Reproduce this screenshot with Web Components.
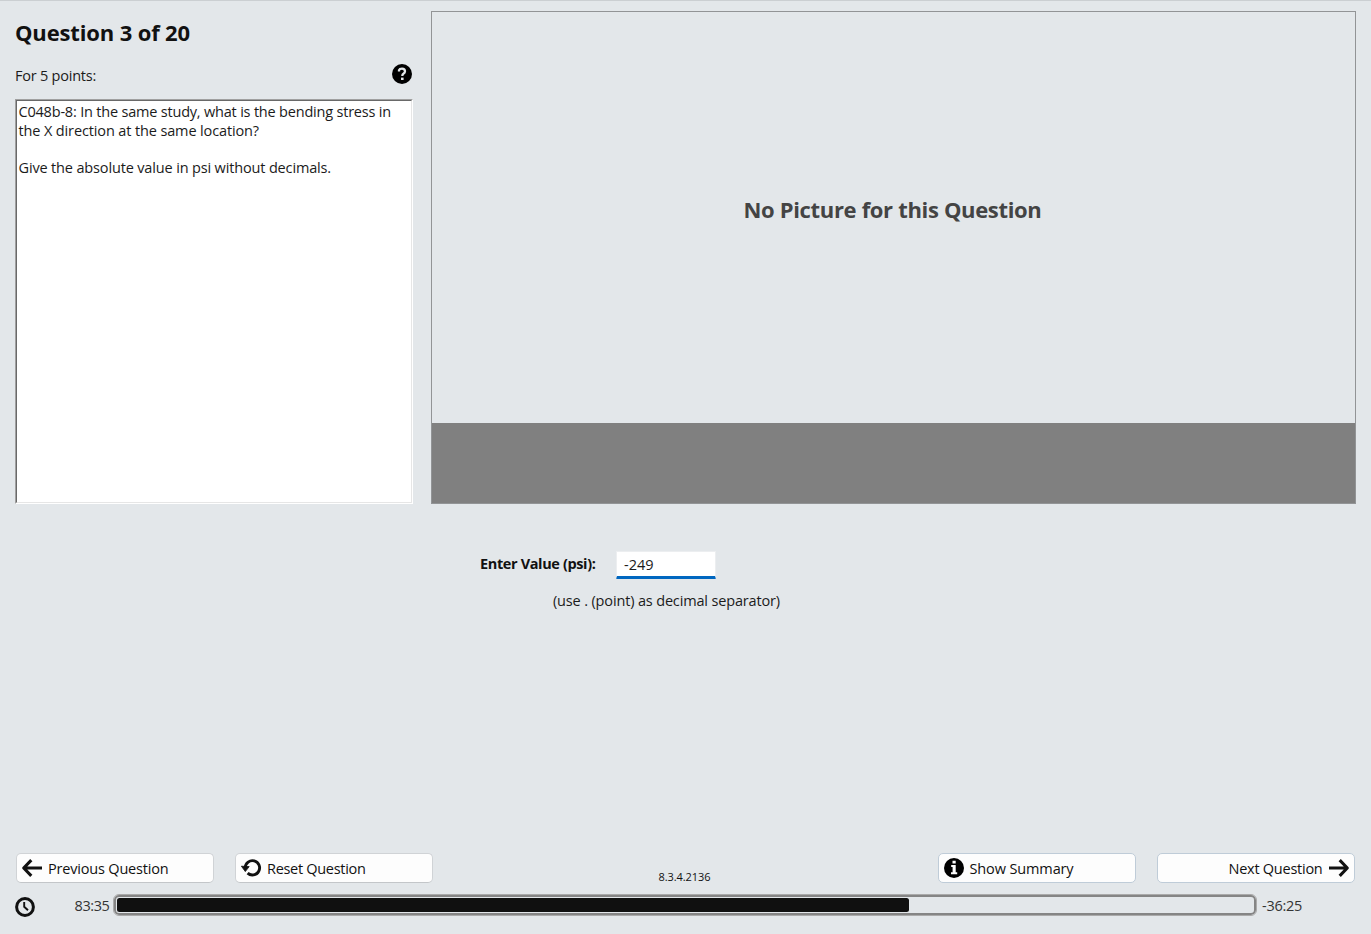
<!DOCTYPE html>
<html lang="en">
<head>
<meta charset="utf-8">
<title>Question 3 of 20</title>
<style>
html,body{margin:0;height:100%;overflow:hidden;background:#e3e7ea}
body{font-family:"Open Sans","Noto Sans",sans-serif;color:#1b1b1b}
</style>
</head>
<body>
<quiz-page></quiz-page>
<script>
function define(name, html, setup) {
  const t = document.createElement('template');
  t.innerHTML = html;
  customElements.define(name, class extends HTMLElement {
    connectedCallback() {
      if (this.shadowRoot) return;
      this.attachShadow({mode: 'open'}).append(t.content.cloneNode(true));
      if (setup) setup(this, this.shadowRoot);
    }
  });
}

/* One line of text, tracked so that it fills the width given in its attribute. */
define('fit-text', `<style>
:host{display:block;white-space:pre;font-size:14.5px;line-height:20px;flex:none}
span{display:inline-block}
</style><span><slot></slot></span>`, (el, root) => {
  const span = root.querySelector('span');
  const target = parseFloat(el.getAttribute('width'));
  const natural = span.getBoundingClientRect().width;
  const n = el.textContent.length;
  if (target && n > 1) {
    const s = (target - natural) / n;
    span.style.letterSpacing = s.toFixed(3) + 'px';
  }
});

const ICONS = {
  help: '<circle cx="10" cy="10" r="10" fill="#000"/><path d="M7 7.6V6.2Q7.6 4.6 10 4.6Q13 4.6 13 7.3Q13 8.8 11.4 9.7Q10.3 10.4 10.3 11.9" fill="none" stroke="#e3e7ea" stroke-width="2.3"/><rect x="9" y="13.6" width="2.6" height="2.4" fill="#e3e7ea"/>',
  info: '<circle cx="10" cy="10" r="10" fill="#000"/><path d="M8.5 2.8h3.2v2.8H8.5zM7.2 7h4.5v7.2h1.5v2H7v-2h1.6V9H7.2z" fill="#fdfdfd"/>',
  left: '<path d="M20 10H2.2M9.3 2.2L1.7 10l7.6 7.8" fill="none" stroke="#111" stroke-width="3.1" stroke-linejoin="round"/>',
  right: '<path d="M0 10h17.8M10.7 2.2l7.6 7.8-7.6 7.8" fill="none" stroke="#111" stroke-width="3.1" stroke-linejoin="round"/>',
  reset: '<path d="M4.2 9.6A7.2 7.2 0 1 1 6.6 15.2" fill="none" stroke="#111" stroke-width="2.9"/><path d="M.4 8.2L8.2 8.6 4.3 13.6z" fill="#111" stroke="#111" stroke-width=".8" stroke-linejoin="round"/>',
  clock: '<circle cx="10" cy="10" r="8.4" fill="none" stroke="#111" stroke-width="3"/><path d="M9.2 5v4.8l3.8 3.4" fill="none" stroke="#111" stroke-width="1.9"/>'
};
define('ui-icon', `<style>:host{display:block;width:20px;height:20px;flex:none}svg{display:block;overflow:visible}</style>
<svg width="20" height="20" viewBox="0 0 20 20"></svg>`, (el, root) => {
  root.querySelector('svg').innerHTML = ICONS[el.getAttribute('name')];
});

define('nav-button', `<style>
:host{display:block;width:198px;height:30px;flex:none}
button{all:unset;box-sizing:border-box;width:100%;height:100%;display:flex;align-items:center;gap:6px;padding:0 5px;
background:#fdfdfd;border:1px solid #d0d3d6;border-bottom-color:#c3c6c9;border-radius:5px;color:#111}
::slotted(fit-text){position:relative;top:1px}
:host([cool]) button{border-color:#bfccd8}
:host([end]) button{justify-content:flex-end;padding-right:5px}
</style><button><slot></slot></button>`);

define('question-panel', `<style>
:host{display:flex;flex-direction:column;width:398px;height:504px;flex:none}
.title{font-size:22px;font-weight:700;line-height:30px;margin-top:17px;color:#111}
.row{display:flex;justify-content:space-between;margin-top:17px;height:35px;padding-right:1px}
.row fit-text{margin-top:2px}
.box{flex:1;box-sizing:border-box;background:#fff;border:1px solid;border-color:#a0a0a0 #fff #fff #a0a0a0}
.in{height:100%;box-sizing:border-box;border:1px solid;border-color:#696969 #e6e6e6 #e6e6e6 #696969;padding:2px 0 0 1.5px}
.in fit-text{line-height:18.7px;min-height:18.7px}
</style>
<fit-text class="title" width="175">Question 3 of 20</fit-text>
<div class="row"><fit-text width="81">For 5 points:</fit-text><ui-icon name="help"></ui-icon></div>
<div class="box"><div class="in">
<fit-text width="372.5">C048b-8: In the same study, what is the bending stress in</fit-text>
<fit-text width="240.5">the X direction at the same location?</fit-text>
<fit-text></fit-text>
<fit-text width="312.5">Give the absolute value in psi without decimals.</fit-text>
</div></div>`);

define('picture-panel', `<style>
:host{display:flex;flex-direction:column;box-sizing:border-box;width:925px;height:493px;margin-top:11px;border:1px solid #929496;flex:none}
.v{flex:1;display:flex;align-items:center;justify-content:center;color:#444;padding:0 2px 16px 0}
.v fit-text{font-size:22px;font-weight:700;line-height:30px}
.b{height:80.5px;background:#808080}
</style><div class="v"><fit-text width="298">No Picture for this Question</fit-text></div><div class="b"></div>`);

define('answer-form', `<style>
:host{display:block;padding:47px 0 0 480px;flex:1}
.r{display:flex;align-items:flex-start;gap:20.5px}
.r>fit-text{font-weight:700;color:#111;margin-top:3px}
.f{box-sizing:border-box;width:100px;height:28px;background:#fff;border:1px solid #eceef0;border-bottom:3px solid #0067c0;padding:3px 0 0 7px;border-radius:1px}
.h{margin:12px 0 0 73px}
</style><div class="r"><fit-text width="115.5">Enter Value (psi):</fit-text><div class="f"><fit-text width="29.5">-249</fit-text></div></div>
<fit-text class="h" width="227">(use . (point) as decimal separator)</fit-text>`);

define('time-bar', `<style>
:host{display:flex;align-items:flex-start;height:39px;padding-left:15px;color:#333}
ui-icon{margin-top:1.5px}
fit-text{margin-top:1px}
.e{margin-left:39.5px}
.t{box-sizing:border-box;width:1142px;height:20px;border:2px solid #858585;border-radius:5px;margin:0 6px 0 4.5px;padding:1px;outline:.5px solid #aaa}
.t i{display:block;width:792px;height:14px;background:#101010;border-radius:2.5px}
</style><ui-icon name="clock"></ui-icon><fit-text class="e" width="35">83:35</fit-text><div class="t"><i></i></div><fit-text width="40">-36:25</fit-text>`);

define('nav-bar', `<style>
:host{display:flex;height:42px;padding:0 16px;align-items:flex-start}
nav-button+nav-button{margin-left:21px}
.v{font-size:11px;line-height:16px;color:#111;margin:16px 227px 0 225.5px}
</style>
<nav-button><ui-icon name="left"></ui-icon><fit-text width="120.5">Previous Question</fit-text></nav-button>
<nav-button><ui-icon name="reset"></ui-icon><fit-text width="98.5">Reset Question</fit-text></nav-button>
<fit-text class="v" width="52">8.3.4.2136</fit-text>
<nav-button cool><ui-icon name="info"></ui-icon><fit-text width="104">Show Summary</fit-text></nav-button>
<nav-button cool end><fit-text width="94">Next Question</fit-text><ui-icon name="right"></ui-icon></nav-button>`);

define('quiz-page', `<style>
:host{display:flex;flex-direction:column;width:1371px;height:934px;box-sizing:border-box;background:#e3e7ea;box-shadow:inset 0 1px #cbcfd2}
.top{display:flex;gap:18px;padding-left:15px}
</style>
<div class="top"><question-panel></question-panel><picture-panel></picture-panel></div>
<answer-form></answer-form><nav-bar></nav-bar><time-bar></time-bar>`);
</script>
</body>
</html>
